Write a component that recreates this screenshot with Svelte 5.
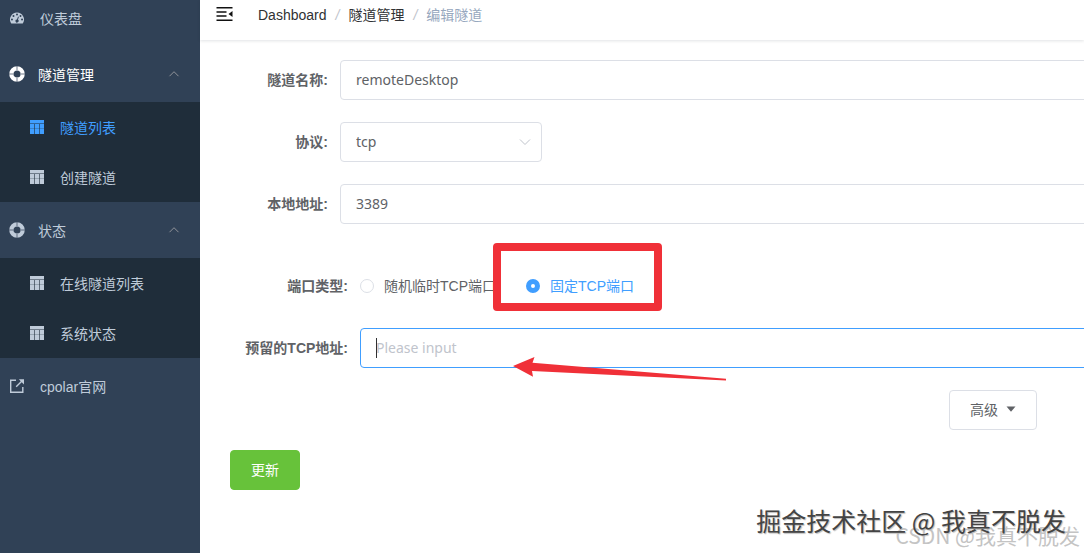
<script>
  let tunnelName = $state("remoteDesktop");
  let protocol = $state("tcp");
  let localAddress = $state("3389");
  let portType = $state("fixed");
  let remoteAddress = $state("");

  let groups = $state([
    {
      title: "隧道管理",
      active: true,
      open: true,
      items: [
        { title: "隧道列表", active: true },
        { title: "创建隧道", active: false },
      ],
    },
    {
      title: "状态",
      active: false,
      open: true,
      items: [
        { title: "在线隧道列表", active: false },
        { title: "系统状态", active: false },
      ],
    },
  ]);
</script>

<div class="app">
  <nav class="sidebar">
    <a class="item first" href="#dashboard">
      <svg class="icon" viewBox="0 0 128 100">
        <path
          fill="currentColor"
          fill-rule="evenodd"
          d="M64 0a64 64 0 0 0-54 98q2 2 5 2h98q3 0 5-2A64 64 0 0 0 64 0zM18 55a9 9 0 1 1 0 18 9 9 0 0 1 0-18zM32 23a9 9 0 1 1 0 18 9 9 0 0 1 0-18zM64 9a9 9 0 1 1 0 18 9 9 0 0 1 0-18zM96 23a9 9 0 1 1 0 18 9 9 0 0 1 0-18zM110 55a9 9 0 1 1 0 18 9 9 0 0 1 0-18zM77 37q4 2 3 6l-7 24a14 14 0 1 1-9-3l8-24q2-4 5-3z"
        />
      </svg>
      <span>仪表盘</span>
    </a>

    {#each groups as group}
      <button
        class="item group"
        class:active={group.active}
        aria-expanded={group.open}
        onclick={() => (group.open = !group.open)}
      >
        <svg class="icon ring" viewBox="0 0 16 16">
          <circle cx="8" cy="8" r="5.7" fill="none" stroke="currentColor" stroke-width="4.2" />
          <path d="M8 0v4M8 12v4M0 8h4M12 8h4" stroke="#304156" stroke-width="0.7" />
        </svg>
        <span>{group.title}</span>
        <svg class="arrow" class:closed={!group.open} viewBox="0 0 12 12">
          <path d="M1.500 8.200 6 3.700l4.500 4.500" fill="none" stroke="#909399" />
        </svg>
      </button>
      {#if group.open}
        <div class="submenu">
          {#each group.items as item}
            <a class="item sub" class:active={item.active} href="#{item.title}">
              <svg class="icon" viewBox="0 0 14 14">
                <path
                  fill="currentColor"
                  d="M0 0h14v3.600H0zM0 4h4.400v4.700H0zM5 4h4v4.700H5zM9.600 4H14v4.700H9.600zM0 9.100h4.400V14H0zM5 9.100h4V14H5zM9.600 9.100H14V14H9.600z"
                />
              </svg>
              <span>{item.title}</span>
            </a>
          {/each}
        </div>
      {/if}
    {/each}

    <a class="item" href="#cpolar">
      <svg class="icon" viewBox="0 0 14 14" fill="none" stroke="currentColor" stroke-width="1.400">
        <path d="M6 1.200H.7v12.100h12.100V8M6.200 7.800 12.500 1.500" />
        <path d="M8.800.2H14v5.200z" fill="currentColor" stroke="none" />
      </svg>
      <span>cpolar官网</span>
    </a>
  </nav>

  <main>
    <header>
      <button class="hamburger" aria-label="菜单">
        <svg viewBox="0 0 16 14">
          <path d="M0 .8h16M0 5h10M0 9h10M0 13.200h16" stroke="currentColor" stroke-width="1.500" />
          <path d="M12 7l4-3v6z" fill="currentColor" />
        </svg>
      </button>
      <div class="breadcrumb">
        <a href="#dashboard">Dashboard</a>
        <i>/</i>
        <a href="#tunnel">隧道管理</a>
        <i>/</i>
        <span>编辑隧道</span>
      </div>
    </header>

    <form onsubmit={(e) => e.preventDefault()}>
      <div class="row">
        <label class="label" for="name">隧道名称:</label>
        <input id="name" class="control" type="text" bind:value={tunnelName} />
      </div>
      <div class="row">
        <label class="label" for="protocol">协议:</label>
        <div class="select">
          <select id="protocol" class="control" bind:value={protocol}>
            <option>tcp</option>
            <option>http</option>
          </select>
          <svg viewBox="0 0 12 12">
            <path d="M1 3.500l5 5 5-5" fill="none" stroke="#c0c4cc" />
          </svg>
        </div>
      </div>
      <div class="row">
        <label class="label" for="address">本地地址:</label>
        <input id="address" class="control" type="text" bind:value={localAddress} />
      </div>

      <div class="tcp">
        <div class="row" role="radiogroup" aria-labelledby="port-type">
          <span class="label" id="port-type">端口类型:</span>
          <label class="radio">
            <input type="radio" name="port" value="random" bind:group={portType} />
            <span>随机临时TCP端口</span>
          </label>
          <label class="radio">
            <input type="radio" name="port" value="fixed" bind:group={portType} />
            <span>固定TCP端口</span>
            <b class="mark"></b>
          </label>
        </div>
        <div class="row">
          <label class="label" for="remote">预留的TCP地址:</label>
          <div class="remote">
            <input
              id="remote"
              class="control focused"
              type="text"
              placeholder="Please input"
              bind:value={remoteAddress}
            />
            <i class="caret"></i>
            <svg class="pointer" viewBox="0 0 214 25">
              <path
                d="M0 10 21.500 1l-2 5.700L213 22.800v1.600L19 15l1 5.800z"
                fill="#f03038"
              />
            </svg>
          </div>
        </div>
      </div>

      <div class="advanced">
        <button type="button" class="button">
          高级
          <svg viewBox="0 0 10 6"><path d="M.5.500h9L5 5.800z" fill="currentColor" /></svg>
        </button>
      </div>
      <button class="button primary">更新</button>
    </form>
  </main>

  <div class="watermark csdn">CSDN @我真不脱发</div>
  <div class="watermark juejin">掘金技术社区 @ 我真不脱发</div>
</div>

<style>
  :global(body) {
    margin: 0;
    background: #fff;
  }

  .app {
    display: flex;
    min-height: 100vh;
    position: relative;
    overflow: hidden;
    font-family: "Liberation Sans", "Noto Sans CJK SC", sans-serif;
    font-size: 14px;
    color: #606266;
  }

  .app * {
    box-sizing: border-box;
  }

  a {
    text-decoration: none;
  }

  button,
  input,
  select {
    font: inherit;
    color: inherit;
    margin: 0;
  }

  .sidebar {
    flex: 0 0 200px;
    background: #304156;
  }

  .item {
    display: flex;
    align-items: center;
    gap: 16px;
    width: 100%;
    height: 56px;
    padding: 0 20px 0 10px;
    border: 0;
    background: none;
    color: #bfcbd9;
    text-align: left;
    cursor: pointer;
  }

  .item.first {
    height: 46px;
    padding-bottom: 10px;
  }

  .item.group {
    gap: 13px;
    padding-left: 9px;
  }

  .item.group.active {
    color: #fff;
  }

  .item.sub {
    height: 50px;
    padding-left: 30px;
  }

  .item.sub.active {
    color: #409eff;
  }

  .submenu {
    background: #1f2d3a;
  }

  .icon {
    flex: none;
    width: 14px;
    height: 14px;
  }

  .icon.ring {
    width: 16px;
    height: 16px;
  }

  .arrow {
    width: 12px;
    height: 12px;
    margin-left: auto;
  }

  .arrow.closed {
    transform: rotate(180deg);
  }

  main {
    flex: 1;
    min-width: 0;
  }

  header {
    display: flex;
    align-items: center;
    gap: 25px;
    height: 40px;
    padding: 0 16px 12px;
    box-shadow: 0 1px 3px rgba(0, 21, 41, 0.12);
  }

  .hamburger {
    padding: 0;
    border: 0;
    background: none;
    color: #111;
  }

  .hamburger svg {
    display: block;
    width: 17px;
    height: 14px;
  }

  .breadcrumb {
    display: flex;
    align-items: baseline;
    gap: 9px;
    color: #97a8be;
  }

  .breadcrumb a {
    color: #303133;
  }

  .breadcrumb i {
    color: #c0c4cc;
  }

  form {
    padding: 20px 0 20px 30px;
  }

  .row {
    display: flex;
    align-items: center;
    min-height: 40px;
    margin-bottom: 22px;
  }

  .label {
    flex: 0 0 110px;
    padding: 0 12px 2px 0;
    text-align: right;
    font-weight: bold;
    white-space: nowrap;
  }

  .tcp {
    padding-top: 20px;
  }

  .tcp .label {
    flex-basis: 130px;
  }

  /* text fields run on past the right edge */
  .control {
    flex: 1;
    width: 100%;
    height: 40px;
    margin-right: -20px;
    padding: 0 15px 2px;
    border: 1px solid #dcdfe6;
    border-radius: 4px;
    background: #fff;
    font-family: "Noto Sans", "Noto Sans CJK SC", sans-serif;
    font-size: 14px;
    outline: none;
    appearance: none;
  }

  .control::placeholder {
    color: #c0c4cc;
  }

  .control.focused {
    border-color: #409eff;
  }

  .select {
    position: relative;
    width: 202px;
  }

  .select .control {
    display: block;
    margin: 0;
  }

  .select svg {
    position: absolute;
    top: 14px;
    right: 11px;
    width: 12px;
    height: 12px;
    pointer-events: none;
  }

  .radio {
    display: flex;
    align-items: center;
    gap: 10px;
    position: relative;
    margin-right: 30px;
    white-space: nowrap;
  }

  .radio span {
    padding-bottom: 2px;
  }

  .radio input {
    width: 14px;
    height: 14px;
    border: 1px solid #dcdfe6;
    border-radius: 50%;
    background: #fff;
    appearance: none;
  }

  .radio input:checked {
    border: 5px solid #409eff;
  }

  .radio input:checked + span {
    color: #409eff;
  }

  .mark {
    position: absolute;
    left: -33px;
    right: -28px;
    top: 50%;
    height: 68px;
    margin-top: -43px;
    border: 8px solid #f03038;
    border-radius: 4px;
    pointer-events: none;
  }

  .remote {
    position: relative;
    display: flex;
    flex: 1;
  }

  .caret {
    position: absolute;
    left: 16px;
    top: 10px;
    width: 1px;
    height: 20px;
    background: #303133;
  }

  .pointer {
    position: absolute;
    left: 153px;
    top: 28px;
    width: 214px;
    height: 25px;
    pointer-events: none;
  }

  .advanced {
    display: flex;
    justify-content: flex-end;
    margin: 0 47px 20px 0;
  }

  .button {
    display: flex;
    align-items: center;
    justify-content: center;
    gap: 8px;
    height: 40px;
    padding: 0 20px 2px;
    border: 1px solid #dcdfe6;
    border-radius: 4px;
    background: #fff;
    cursor: pointer;
  }

  .button svg {
    width: 10px;
    height: 6px;
  }

  .button.primary {
    border-color: #67c23a;
    background: #67c23a;
    color: #fff;
  }

  .watermark {
    position: absolute;
    white-space: nowrap;
    font-family: "Noto Sans CJK SC", sans-serif;
    pointer-events: none;
  }

  .juejin {
    right: 18px;
    bottom: 15px;
    font-size: 25px;
    color: #444;
    line-height: 36px;
    text-shadow: 1px 1px 1px #bbb;
  }

  .csdn {
    right: 4px;
    bottom: 3px;
    font-size: 21px;
    line-height: 30px;
    color: #c4c4c4;
  }
</style>
